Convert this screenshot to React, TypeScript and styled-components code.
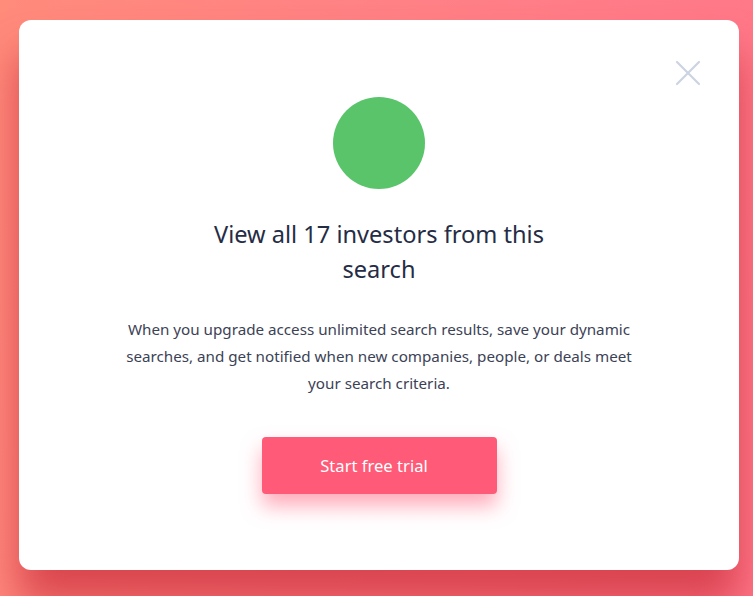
import styled, { createGlobalStyle } from "styled-components";

const Global = createGlobalStyle`
  html, body {
    margin: 0;
    padding: 0;
  }
  body {
    font-family: "Noto Sans", "Open Sans", sans-serif;
    -webkit-font-smoothing: antialiased;
  }
`;

const Page = styled.div`
  box-sizing: border-box;
  width: 753px;
  height: 596px;
  padding: 20px 14px 26px 19px;
  background: linear-gradient(100deg, #ff8b7b 0%, #ff8086 50%, #ff7689 100%);
  overflow: hidden;
`;

const Modal = styled.div`
  position: relative;
  box-sizing: border-box;
  height: 550px;
  background: #ffffff;
  border-radius: 12px;
  box-shadow: 0 34px 40px rgba(205, 50, 62, 0.75);
  display: flex;
  flex-direction: column;
  align-items: center;
  padding-top: 77px;
`;

const Close = styled.button`
  position: absolute;
  top: 40px;
  right: 38px;
  width: 26px;
  height: 26px;
  padding: 0;
  border: 0;
  background: none;
  cursor: pointer;
`;

const Badge = styled.div`
  width: 92px;
  height: 92px;
  border-radius: 50%;
  background: #5ac46b;
`;

const Title = styled.h2`
  margin: 28px 0 0;
  max-width: 350px;
  font-size: 23.6px;
  font-weight: 400;
  line-height: 35px;
  color: #252c45;
  text-align: center;
`;

const Text = styled.p`
  margin: 29px 0 0;
  max-width: 512px;
  font-size: 15.2px;
  line-height: 27px;
  color: #3c4256;
  text-align: center;
`;

const Cta = styled.button`
  margin-top: 40px;
  width: 235px;
  height: 57px;
  padding: 0 10px 0 0;
  border: 0;
  border-radius: 4px;
  background: #ff5a77;
  color: #ffffff;
  font-family: inherit;
  font-size: 16.6px;
  box-shadow: 0 12px 20px rgba(255, 90, 119, 0.5);
  cursor: pointer;
`;

export default function App() {
  return (
    <Page>
      <Global />
      <Modal>
        <Close aria-label="Close">
          <svg width="26" height="26" viewBox="0 0 26 26">
            <path
              d="M2 2L24 24M24 2L2 24"
              stroke="#ccd3e1"
              strokeWidth="2.2"
              strokeLinecap="round"
            />
          </svg>
        </Close>
        <Badge />
        <Title>View all 17 investors from this search</Title>
        <Text>
          When you upgrade access unlimited search results, save your dynamic
          searches, and get notified when new companies, people, or deals meet
          your search criteria.
        </Text>
        <Cta>Start free trial</Cta>
      </Modal>
    </Page>
  );
}
